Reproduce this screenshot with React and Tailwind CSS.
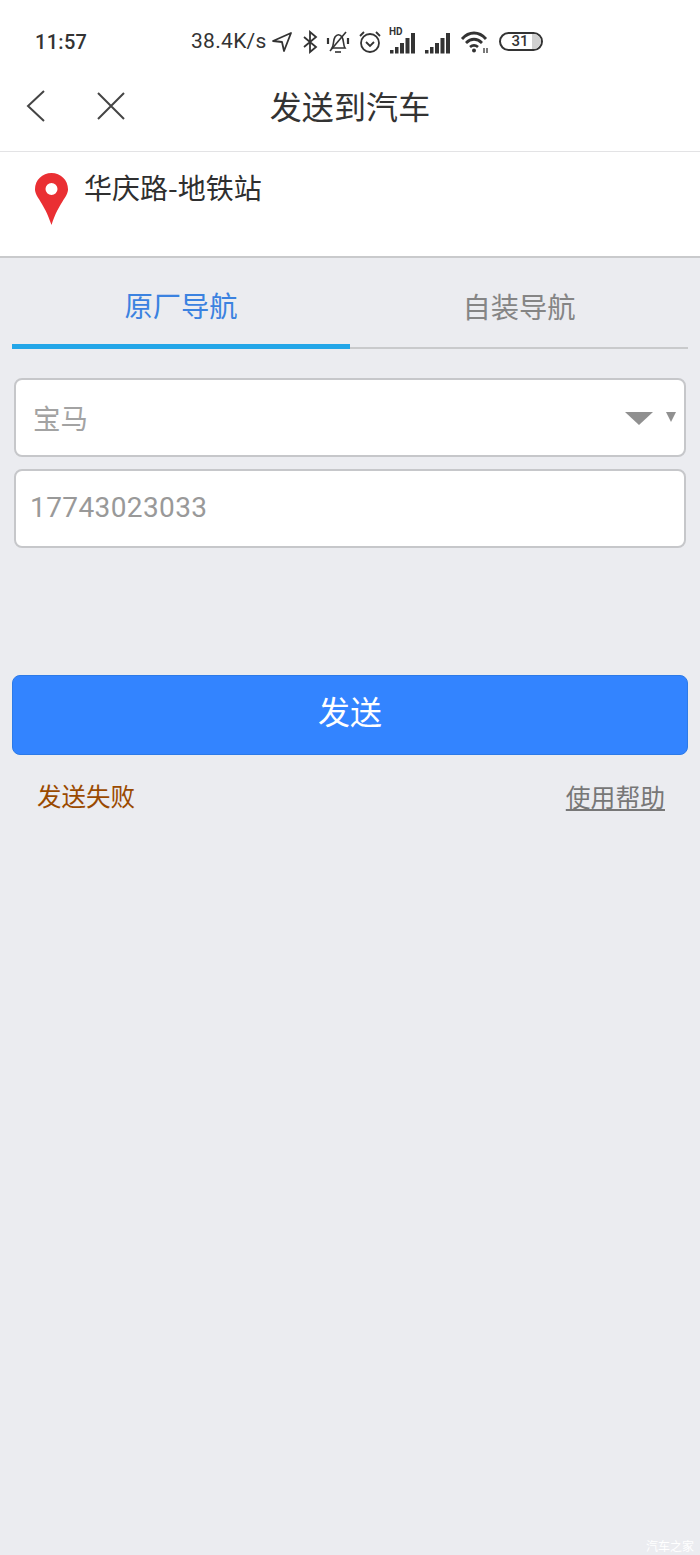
const FONT = '"Noto Sans CJK SC", Roboto, sans-serif';

function SignalBars() {
  return (
    <>
      <rect x="1" y="20" width="3.5" height="3.5" />
      <rect x="6" y="17" width="3.5" height="6.5" />
      <rect x="11" y="13" width="4" height="10.5" />
      <rect x="16.5" y="8" width="4" height="15.5" />
      <rect x="22" y="3" width="4" height="20.5" />
    </>
  );
}

function StatusIcons() {
  return (
    <div className="flex items-center">
      <svg className="w-[20px] h-[20px] ml-[4px]" viewBox="0 0 20 20" fill="none" stroke="#333" strokeWidth="1.8" strokeLinejoin="round">
        <path d="M1 9 L19 1 L12 19 L10 10 Z" />
      </svg>
      <svg className="w-[16px] h-[24px] ml-[10px]" viewBox="0 0 16 24" fill="none" stroke="#333" strokeWidth="1.8">
        <path d="M2 7 L14 17 L8 22 V2 L14 7 L2 17" />
      </svg>
      <svg className="w-[24px] h-[24px] ml-[8px]" viewBox="0 0 24 24" fill="none" stroke="#333" strokeWidth="1.6">
        <path d="M6 18 C8 15 7 10 9 7 C11 4 14 4 16 7 C18 10 17 15 19 18 Z" />
        <path d="M9 22 H15" />
        <path d="M4 21 L20 2" />
        <path d="M2 8 V14 M22 8 V14" strokeWidth="2.2" />
      </svg>
      <svg className="w-[24px] h-[24px] ml-[8px]" viewBox="0 0 24 24" fill="none" stroke="#333" strokeWidth="1.8">
        <circle cx="12" cy="13" r="9" />
        <path d="M8 12 L12 16 L16 12" />
        <path d="M2 6 L6 2 M22 6 L18 2" />
      </svg>
      <div className="relative ml-[7px] w-[28px] h-[24px]">
        <span className="absolute left-0 -top-[3px] text-[10px] font-bold leading-none text-[#333]">HD</span>
        <svg className="w-[28px] h-[24px]" viewBox="0 0 28 24" fill="#333">
          <SignalBars />
        </svg>
      </div>
      <svg className="w-[28px] h-[24px] ml-[7px]" viewBox="0 0 28 24" fill="#333">
        <SignalBars />
      </svg>
      <svg className="w-[30px] h-[24px] ml-[8px]" viewBox="0 0 30 24" fill="none" stroke="#333" strokeWidth="2.8">
        <path d="M2 9 C9 1 19 1 26 9" />
        <path d="M6 13 C11 8 17 8 22 13" />
        <path d="M10 17 C12.5 15 15.5 15 18 17" />
        <circle cx="14" cy="20.5" r="2" fill="#333" stroke="none" />
        <path d="M24 18 V23 M27 18 V23" strokeWidth="1.3" />
      </svg>
      <div className="relative ml-[9px] w-[44px] h-[19px] rounded-full border-2 border-[#333] overflow-hidden flex items-center justify-center">
        <div className="absolute right-0 top-0 bottom-0 w-[9px] bg-[#d0d0d0]" />
        <span className="relative text-[15px] font-medium leading-none text-[#333] mr-[2px]" style={{ fontFamily: 'Roboto, sans-serif' }}>31</span>
      </div>
    </div>
  );
}

export default function App() {
  return (
    <div className="w-[700px] h-[1555px] bg-[#ebecf0] flex flex-col overflow-hidden relative" style={{ fontFamily: FONT }}>
      {/* Status bar */}
      <div className="bg-white h-[75px] shrink-0 flex items-center pl-[35px] pt-[8px]" style={{ fontFamily: 'Roboto, sans-serif' }}>
        <span className="text-[20px] font-medium text-[#333] tracking-[0.3px] w-[156px]">11:57</span>
        <span className="text-[21px] text-[#333] tracking-[0.3px] w-[77px]">38.4K/s</span>
        <StatusIcons />
      </div>

      {/* Header */}
      <div className="bg-white h-[77px] shrink-0 border-b border-[#e3e3e5] relative flex items-center justify-center pb-[17px]">
        <div className="absolute left-[26px] top-[15px] flex items-center gap-[51px]">
          <svg className="w-[20px] h-[32px]" viewBox="0 0 20 32" fill="none" stroke="#444" strokeWidth="2">
            <path d="M18 1 L2 16 L18 31" />
          </svg>
          <svg className="w-[28px] h-[28px]" viewBox="0 0 28 28" fill="none" stroke="#444" strokeWidth="2">
            <path d="M1 1 L27 27 M27 1 L1 27" />
          </svg>
        </div>
        <span className="text-[32px] text-[#333] leading-none tracking-[0.1px]">发送到汽车</span>
      </div>

      {/* Location */}
      <div className="bg-white h-[106px] shrink-0 border-b-2 border-[#c9cacc] flex items-start pl-[35px] pt-[21px]">
        <svg className="w-[33px] h-[52px]" viewBox="0 0 33 52" fill="#ea2f33">
          <path fillRule="evenodd" d="M16.5 0 C7.4 0 0 7.2 0 16.2 C0 24 9 29 16.5 52 C24 29 33 24 33 16.2 C33 7.2 25.6 0 16.5 0 Z M16.5 10 a6 6 0 1 1 0 12 a6 6 0 0 1 0 -12 Z" />
        </svg>
        <span className="ml-[16px] text-[28px] text-[#2f2f2f] leading-none">华庆路-地铁站</span>
      </div>

      {/* Tabs */}
      <div className="mx-[12px] h-[91px] shrink-0 flex border-b-2 border-[#c9cacc]">
        <div className="w-1/2 h-[91px] border-b-[5px] border-[#23a6e8] flex items-center justify-center pt-[9px]">
          <span className="text-[28.3px] text-[#3b82e0] leading-none">原厂导航</span>
        </div>
        <div className="w-1/2 flex items-center justify-center pt-[7px]">
          <span className="text-[28.3px] text-[#858585] leading-none">自装导航</span>
        </div>
      </div>

      {/* Form */}
      <div className="mx-[14px] mt-[29px] flex flex-col gap-[12px]">
        <div className="h-[79px] bg-white border-2 border-[#c6c7ca] rounded-[8px] flex items-center pl-[17px] pr-[8px]">
          <span className="text-[27.5px] text-[#a3a3a3] leading-none flex-1">宝马</span>
          <div className="w-0 h-0 border-x-[14px] border-x-transparent border-t-[13px] border-t-[#909090] mt-[2px]" />
          <div className="ml-[13px] w-0 h-0 border-x-[5px] border-x-transparent border-t-[10px] border-t-[#909090] -mt-[2px]" />
        </div>
        <div className="h-[79px] bg-white border-2 border-[#c6c7ca] rounded-[8px] flex items-center pl-[14px] pb-[2px]">
          <span className="text-[28px] text-[#999] leading-none tracking-[0.4px]" style={{ fontFamily: 'Roboto, sans-serif' }}>17743023033</span>
        </div>
      </div>

      {/* Send button */}
      <div className="mx-[12px] mt-[127px] h-[80px] shrink-0 bg-[#3384ff] border border-[#2c7ae8] rounded-[8px] flex items-center justify-center pb-[11px]">
        <span className="text-[32px] text-white leading-none">发送</span>
      </div>

      {/* Footer links */}
      <div className="mt-[29px] pl-[37px] pr-[35px] flex justify-between items-center">
        <span className="text-[24.5px] text-[#9a4a00] leading-none">发送失败</span>
        <span className="text-[24.8px] text-[#777] leading-none underline underline-offset-2">使用帮助</span>
      </div>

      {/* Watermark */}
      <span className="absolute right-[6px] bottom-[3px] text-[12px] text-white leading-none">汽车之家</span>
    </div>
  );
}
